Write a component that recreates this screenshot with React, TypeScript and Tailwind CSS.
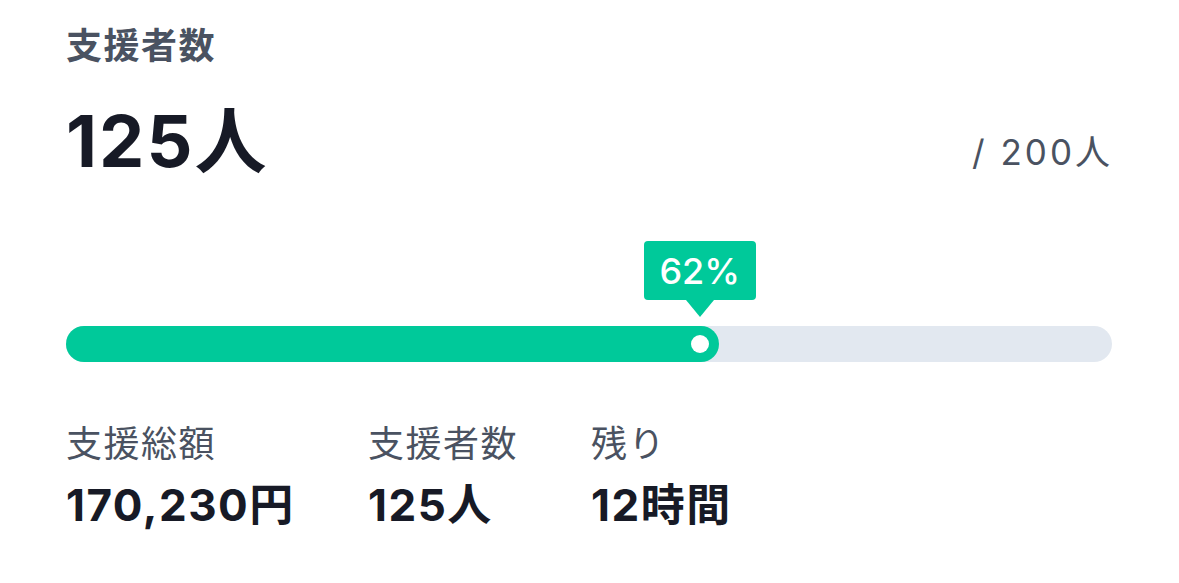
const FONT = 'font-["Inter","Noto_Sans_CJK_JP",sans-serif]';

const stats = [
  { label: '支援総額', value: '170,230円', width: 'w-[302px]' },
  { label: '支援者数', value: '125人', width: 'w-[223px]' },
  { label: '残り', value: '12時間', width: '' },
];

export default function App() {
  const percent = 62;
  return (
    <div className={`w-[1179px] h-[583px] bg-white px-[66px] pt-[22px] ${FONT}`}>
      <div className="text-[36px] font-bold leading-[48px] text-[#4a5261] tracking-[1.5px]">支援者数</div>

      <div className="mt-[26px] flex items-end justify-between">
        <div className="text-[72px] font-bold leading-[90px] text-[#171a26] tracking-[2px]">125人</div>
        <div className="mb-[14px] text-[35px] leading-[40px] text-[#4a5261] tracking-[3px]">/ 200人</div>
      </div>

      <div className="mt-[140px] relative w-[1046px] h-[36px] rounded-full bg-[#e2e8f0]">
        <div className="h-full rounded-full bg-[#00c99a] relative" style={{ width: `${percent}.4%` }}>
          <div className="absolute right-[10px] top-[9px] w-[18px] h-[18px] rounded-full bg-white" />
          <div className="absolute -right-[37px] bottom-[45px] flex flex-col items-center">
            <div className="w-[112px] h-[59px] rounded-[4px] bg-[#00c99a] text-white text-[36px] font-medium flex items-center justify-center">
              {percent}%
            </div>
            <div className="w-0 h-0 border-l-[14px] border-r-[14px] border-t-[17px] border-l-transparent border-r-transparent border-t-[#00c99a]" />
          </div>
        </div>
      </div>

      <div className="mt-[60px] flex">
        {stats.map((s) => (
          <div key={s.label} className={s.width}>
            <div className="text-[36px] leading-[44px] text-[#4a5261] tracking-[1.5px]">{s.label}</div>
            <div className="mt-[14px] text-[44px] font-bold leading-[50px] text-[#171a26] tracking-[1.5px]">{s.value}</div>
          </div>
        ))}
      </div>
    </div>
  );
}
